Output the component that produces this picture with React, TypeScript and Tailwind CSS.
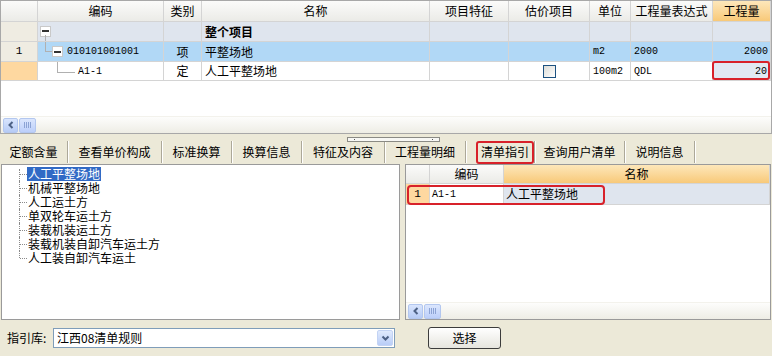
import React from 'react';

const cjk = "font-['Noto_Sans_CJK_SC','Noto_Sans',sans-serif]";
const mono = "font-['Liberation_Mono','DejaVu_Sans_Mono',monospace]";

const cols = [37, 126, 38, 228, 79, 81, 41, 82, 58];
const heads = ['', '编码', '类别', '名称', '项目特征', '估价项目', '单位', '工程量表达式', '工程量'];

function MinusBox() {
  return (
    <span className="inline-flex items-center justify-center w-[11px] h-[11px] border border-[#c9c9c9] bg-white">
      <span className="block w-[7px] h-[2px] bg-[#333]" />
    </span>
  );
}

function HScroll() {
  return (
    <div className="h-[17px] flex items-center gap-[1px] pl-[2px] bg-gradient-to-b from-[#fdfdfc] to-[#eeede5] border-t border-[#f3f2ec]">
      <div className="w-[15px] h-[15px] rounded-[2px] bg-gradient-to-b from-[#d9e5fd] to-[#b6cbf5] border border-[#b3c7ef] flex items-center justify-center">
        <svg width="8" height="8" viewBox="0 0 8 8">
          <path d="M5.5 1 L2.5 4 L5.5 7" stroke="#4d6185" strokeWidth="2" fill="none" />
        </svg>
      </div>
      <div className="w-[17px] h-[15px] rounded-[2px] bg-gradient-to-b from-[#dbe6fd] to-[#bccffa] border border-[#b3c7ef] flex items-center justify-center gap-[1px]">
        {[0, 1, 2, 3].map((i) => (
          <span key={i} className="block w-[1px] h-[6px] bg-[#8ca3d4]" />
        ))}
      </div>
    </div>
  );
}

function TopGrid() {
  const cell = 'border-r border-b border-[#d4d4d4] h-full flex items-center';
  return (
    <div className={`h-[134px] bg-white border border-[#a8a8a8] flex flex-col ${cjk} text-[12px] text-black`}>
      {/* header */}
      <div className="flex h-[21px]">
        {heads.map((h, i) => (
          <div
            key={i}
            style={{ width: cols[i] }}
            className={`${cell} justify-center ${i === 8 ? 'bg-gradient-to-b from-[#fde7ba] to-[#f8c978]' : 'bg-gradient-to-b from-[#fbfbfa] to-[#ebebe7]'}`}
          >
            {h}
          </div>
        ))}
      </div>
      {/* 整个项目 */}
      <div className="flex h-[20px] bg-[#dfe5ee]">
        <div style={{ width: cols[0] }} className={`${cell} bg-[#efece2]`} />
        <div style={{ width: cols[1] }} className={`${cell} pl-[2px] pb-[1px] relative`}>
          <MinusBox />
          <span className="absolute left-[7px] top-[13px] h-[6px] w-[1px] bg-[#b0b0b0]" />
        </div>
        <div style={{ width: cols[2] }} className={cell} />
        <div style={{ width: cols[3] }} className={`${cell} pl-[3px] font-bold`}>整个项目</div>
        {cols.slice(4).map((w, i) => (
          <div key={i} style={{ width: w }} className={cell} />
        ))}
      </div>
      {/* row 1 */}
      <div className="flex h-[20px] bg-[#b1d8f6]">
        <div style={{ width: cols[0] }} className={`${cell} bg-[#efece2] justify-center`}>
          <span className={mono + ' text-[11px]'}>1</span>
        </div>
        <div style={{ width: cols[1] }} className={`${cell} pl-[14px] relative`}>
          <span className="absolute left-[7px] top-0 h-[10px] w-[1px] bg-[#b0b0b0]" />
          <span className="absolute left-[7px] top-[9px] h-[1px] w-[7px] bg-[#b0b0b0]" />
          <MinusBox />
          <span className={`${mono} text-[10px] ml-[4px]`}>010101001001</span>
        </div>
        <div style={{ width: cols[2] }} className={`${cell} justify-center`}>项</div>
        <div style={{ width: cols[3] }} className={`${cell} pl-[3px]`}>平整场地</div>
        <div style={{ width: cols[4] }} className={cell} />
        <div style={{ width: cols[5] }} className={cell} />
        <div style={{ width: cols[6] }} className={`${cell} pl-[3px] ${mono} text-[10px]`}>m2</div>
        <div style={{ width: cols[7] }} className={`${cell} pl-[3px] ${mono} text-[10px]`}>2000</div>
        <div style={{ width: cols[8] }} className={`${cell} justify-end pr-[2px] ${mono} text-[10px]`}>2000</div>
      </div>
      {/* row A1-1 */}
      <div className="flex h-[19px] bg-white">
        <div style={{ width: cols[0] }} className={`${cell} bg-[#fed8a0]`} />
        <div style={{ width: cols[1] }} className={`${cell} relative pl-[40px]`}>
          <span className="absolute left-[19px] top-0 h-[10px] w-[1px] bg-[#b0b0b0]" />
          <span className="absolute left-[19px] top-[10px] h-[1px] w-[18px] bg-[#b0b0b0]" />
          <span className={`${mono} text-[10px]`}>A1-1</span>
        </div>
        <div style={{ width: cols[2] }} className={`${cell} justify-center`}>定</div>
        <div style={{ width: cols[3] }} className={`${cell} pl-[3px]`}>人工平整场地</div>
        <div style={{ width: cols[4] }} className={cell} />
        <div style={{ width: cols[5] }} className={`${cell} justify-center`}>
          <span className="block w-[13px] h-[13px] border border-[#1c5180] bg-gradient-to-br from-[#dcdcd7] to-white" />
        </div>
        <div style={{ width: cols[6] }} className={`${cell} pl-[3px] ${mono} text-[10px]`}>100m2</div>
        <div style={{ width: cols[7] }} className={`${cell} pl-[3px] ${mono} text-[10px]`}>QDL</div>
        <div style={{ width: cols[8] }} className={`${cell} relative justify-end pr-[3px] bg-[#e1e8f2] ${mono} text-[10px]`}>
          20
          <span className="absolute -left-[1px] -top-[1px] right-0 bottom-0 rounded-[3px] border-2 border-[#d8212a]" />
        </div>
      </div>
      <div className="flex-1" />
      <HScroll />
    </div>
  );
}

const tabs = [
  { t: '定额含量', w: 68 },
  { t: '查看单价构成', w: 94 },
  { t: '标准换算', w: 70 },
  { t: '换算信息', w: 70 },
  { t: '特征及内容', w: 83 },
  { t: '工程量明细', w: 81 },
  { t: '清单指引', w: 69, active: true },
  { t: '查询用户清单', w: 90 },
  { t: '说明信息', w: 70 },
];

function TabBar() {
  return (
    <div className={`relative h-[30px] flex items-end pb-[1px] ${cjk} text-[12px] text-black`}>
      <div className="absolute left-[347px] top-[3px] w-[93px] h-[5px] border border-[#8a8a84] bg-[#f7f7f4] flex justify-between px-[6px]">
        <span className="block w-[1px] h-[1px] bg-[#555] mt-[1px]" />
        <span className="block w-[1px] h-[1px] bg-[#555] mt-[1px]" />
      </div>
      {tabs.map((tab) => (
        <div
          key={tab.t}
          style={{ width: tab.w }}
          className={`h-[22px] flex items-center border-r border-[#aca899] shadow-[1px_0_0_#ffffff] ${tab.active ? 'justify-start pl-[10px]' : 'justify-center'}`}
        >
          {tab.active ? (
            <span className="px-[3px] h-[23px] flex items-center rounded-[3px] border-2 border-[#d8212a]">{tab.t}</span>
          ) : (
            tab.t
          )}
        </div>
      ))}
    </div>
  );
}

const tree = ['人工平整场地', '机械平整场地', '人工运土方', '单双轮车运土方', '装载机装运土方', '装载机装自卸汽车运土方', '人工装自卸汽车运土'];

function TreePanel() {
  return (
    <div className={`w-[399px] h-full bg-white border border-[#9a9a9a] pt-[2px] ${cjk} text-[12px] text-black`}>
      {tree.map((t, i) => (
        <div key={t} className="h-[14px] flex items-center relative pl-[25px]">
          <span
            className={`absolute left-[17px] w-0 border-l border-dotted border-[#8a8a8a] ${i === 0 ? 'top-[2px] h-[12px]' : i === tree.length - 1 ? 'top-0 h-[7px]' : 'top-0 h-[14px]'}`}
          />
          <span className="absolute left-[18px] top-[7px] w-[7px] border-t border-dotted border-[#8a8a8a]" />
          <span className={`leading-[14px] px-[1px] ${i === 0 ? 'bg-[#316ac5] text-white' : ''}`}>{t}</span>
        </div>
      ))}
    </div>
  );
}

function GuidePanel() {
  const cell = 'border-r border-b border-[#d4d4d4] h-full flex items-center';
  return (
    <div className={`flex-1 h-full bg-white border border-[#9a9a9a] flex flex-col ${cjk} text-[12px] text-black`}>
      <div className="flex h-[19px]">
        <div className={`w-[24px] ${cell} bg-gradient-to-b from-[#fbfbfa] to-[#ebebe7]`} />
        <div className={`w-[74px] ${cell} justify-center bg-gradient-to-b from-[#fbfbfa] to-[#ebebe7]`}>编码</div>
        <div className={`flex-1 ${cell} justify-center bg-gradient-to-b from-[#fde7ba] to-[#f8c978]`}>名称</div>
      </div>
      <div className="flex h-[21px] relative">
        <div className={`w-[24px] ${cell} justify-center bg-[#fed8a0] ${mono} text-[11px]`}>1</div>
        <div className={`w-[74px] ${cell} pl-[2px] ${mono} text-[10px]`}>A1-1</div>
        <div className={`flex-1 ${cell} pl-[2px] bg-[#dfe5ee]`}>人工平整场地</div>
        <span className="absolute left-[1px] top-[1px] w-[198px] h-[20px] rounded-[4px] border-2 border-[#d8212a]" />
      </div>
      <div className="flex-1" />
      <HScroll />
    </div>
  );
}

export default function App() {
  return (
    <div className="w-[772px] h-[356px] bg-[#ece9d8] flex flex-col overflow-hidden">
      <TopGrid />
      <TabBar />
      <div className="h-[156px] flex gap-[5px] pl-[1px] pr-[1px]">
        <TreePanel />
        <GuidePanel />
      </div>
      <div className={`flex-1 flex items-center pl-[7px] ${cjk} text-[12px] text-black`}>
        <span className="w-[46px]">指引库:</span>
        <div className="w-[342px] h-[20px] bg-white border border-[#7f9db9] flex items-center pl-[3px] justify-between">
          <span>江西08清单规则</span>
          <div className="w-[16px] h-[16px] mr-[1px] rounded-[2px] bg-gradient-to-b from-[#e0eafd] to-[#b9cdf7] border border-[#c3d3f4] flex items-center justify-center">
            <svg width="9" height="7" viewBox="0 0 9 7">
              <path d="M1.5 1.5 L4.5 4.5 L7.5 1.5" stroke="#4d6185" strokeWidth="2" fill="none" />
            </svg>
          </div>
        </div>
        <button className="ml-[33px] w-[73px] h-[22px] rounded-[3px] border border-[#3c3c3c] bg-gradient-to-b from-white to-[#e6e5de] flex items-center justify-center">
          选择
        </button>
      </div>
    </div>
  );
}
